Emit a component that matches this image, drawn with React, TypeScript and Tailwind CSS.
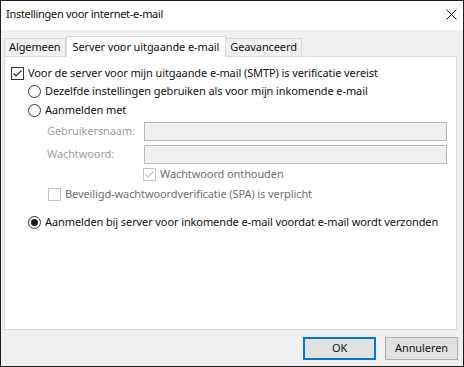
import type { ReactNode } from "react";

function CheckBox({ checked, disabled }: { checked?: boolean; disabled?: boolean }) {
  const color = disabled ? "#c4c4c4" : "#333333";
  return (
    <svg width="13" height="13" viewBox="0 0 13 13" className="shrink-0">
      <rect x="0.5" y="0.5" width="12" height="12" fill="white" stroke={color} />
      {checked && (
        <path d="M2.5 6.5 L5 9 L10.5 3.5" fill="none" stroke={color} strokeWidth="1.2" />
      )}
    </svg>
  );
}

function Radio({ checked }: { checked?: boolean }) {
  return (
    <svg width="13" height="13" viewBox="0 0 13 13" className="shrink-0">
      <circle cx="6.5" cy="6.5" r="6" fill="white" stroke="#333333" />
      {checked && <circle cx="6.5" cy="6.5" r="3.5" fill="#1a1a1a" />}
    </svg>
  );
}

function Row({ className, children }: { className?: string; children: ReactNode }) {
  return (
    <div className={"flex items-center gap-[4px] whitespace-nowrap " + (className ?? "")}>
      {children}
    </div>
  );
}

export default function App() {
  return (
    <div className="flex h-[367px] w-[464px] flex-col border border-[#1e1e1e] bg-[#f0f0f0] font-['Noto_Sans',sans-serif] text-[11px] tracking-[-0.1px] text-[#111]">
      {/* title bar */}
      <div className="flex h-[29px] shrink-0 items-center justify-between bg-white pb-[3px] pl-[5px] pr-[6px]">
        <span className="text-[11px] tracking-[-0.3px]">Instellingen voor internet-e-mail</span>
        <svg width="11" height="11" viewBox="0 0 11 11">
          <path d="M0.5 0.5 L10.5 10.5 M10.5 0.5 L0.5 10.5" stroke="#111" strokeWidth="1" />
        </svg>
      </div>

      {/* tabs */}
      <div className="flex flex-1 flex-col px-[3px] pt-[6px]">
        <div className="flex h-[20px] items-end">
          <div className="flex h-[18px] items-center border border-b-0 border-[#d9d9d9] bg-[#f0f0f0] px-[4px]">
            Algemeen
          </div>
          <div className="relative z-10 -mb-px flex h-[21px] items-center border border-b-0 border-[#d9d9d9] bg-white px-[6px]">
            Server voor uitgaande e-mail
          </div>
          <div className="flex h-[18px] items-center border border-b-0 border-l-0 border-[#d9d9d9] bg-[#f0f0f0] px-[4px]">
            Geavanceerd
          </div>
        </div>

        <div className="mr-[3px] flex h-[274px] flex-col border border-[#d9d9d9] bg-white pl-[6px] pt-[9px]">
          <Row className="h-[14px] gap-[3px]">
            <CheckBox checked />
            <span>Voor de server voor mijn uitgaande e-mail (SMTP) is verificatie vereist</span>
          </Row>
          <Row className="mt-[4px] h-[14px] pl-[17px]">
            <Radio />
            <span>Dezelfde instellingen gebruiken als voor mijn inkomende e-mail</span>
          </Row>
          <Row className="mt-[5px] h-[14px] pl-[17px]">
            <Radio />
            <span>Aanmelden met</span>
          </Row>

          <div className="mt-[5px] flex h-[19px] items-center pl-[36px] pr-[9px] text-[#a0a0a0]">
            <span className="w-[97px]">Gebruikersnaam:</span>
            <div className="h-[19px] flex-1 border border-[#b4b9bd] bg-[#f0f0f0]" />
          </div>
          <div className="mt-[4px] flex h-[19px] items-center pl-[36px] pr-[9px] text-[#a0a0a0]">
            <span className="w-[97px]">Wachtwoord:</span>
            <div className="h-[19px] flex-1 border border-[#b4b9bd] bg-[#f0f0f0]" />
          </div>

          <Row className="mt-[3px] h-[14px] gap-[3px] pl-[132px] text-[#707070]">
            <CheckBox checked disabled />
            <span>Wachtwoord onthouden</span>
          </Row>
          <Row className="mt-[6px] h-[14px] gap-[3px] pl-[37px] text-[#707070]">
            <CheckBox disabled />
            <span>Beveiligd-wachtwoordverificatie (SPA) is verplicht</span>
          </Row>

          <Row className="mt-[14px] h-[14px] pl-[17px]">
            <Radio checked />
            <span>Aanmelden bij server voor inkomende e-mail voordat e-mail wordt verzonden</span>
          </Row>
        </div>
      </div>

      {/* footer */}
      <div className="flex h-[36px] shrink-0 items-center justify-end gap-[9px] pr-[5px]">
        <button className="h-[23px] w-[73px] border-2 border-[#0078d7] bg-[#e1e1e1]">OK</button>
        <button className="h-[23px] w-[73px] border border-[#adadad] bg-[#e1e1e1]">Annuleren</button>
      </div>
    </div>
  );
}
